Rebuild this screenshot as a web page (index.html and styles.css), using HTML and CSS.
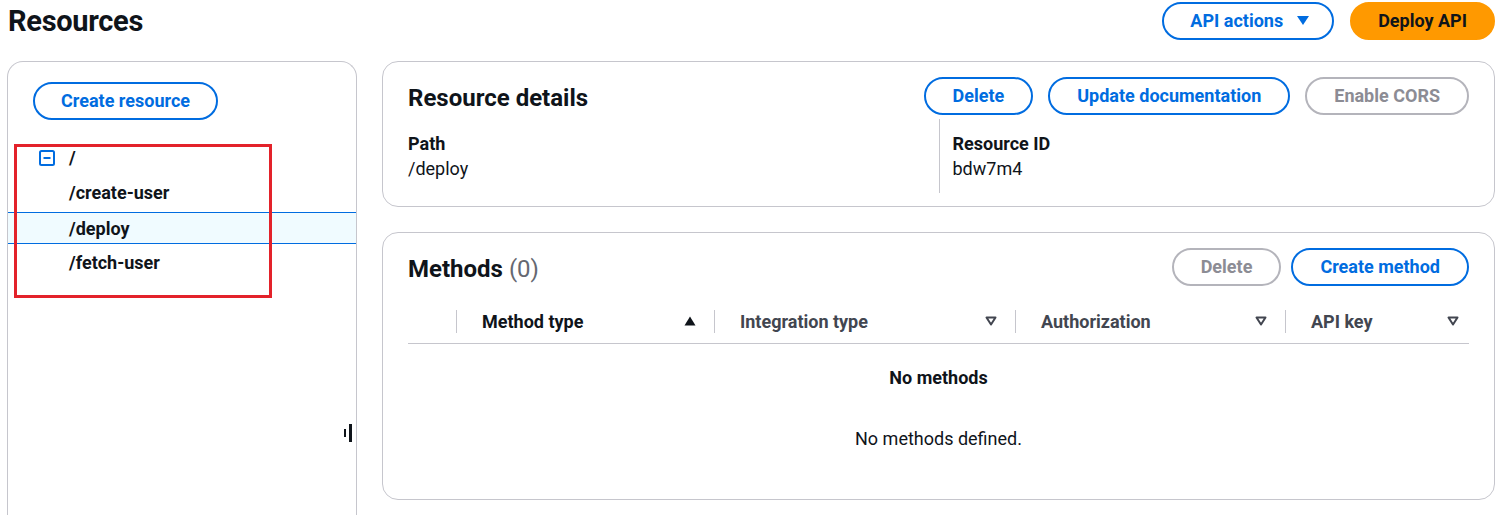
FILE: index.html
```html
<!DOCTYPE html>
<html lang="en">
<head>
<meta charset="utf-8">
<title>Resources</title>
<link rel="stylesheet" href="styles.css">
</head>
<body>
<div class="page">
  <header class="page-header">
    <h1 class="page-title">Resources</h1>
    <div class="header-actions">
      <button class="btn btn-dropdown">API actions
        <svg class="caret" width="12" height="9" viewBox="0 0 12 9"><polygon points="0,0 12,0 6,9" fill="currentColor"/></svg>
      </button>
      <button class="btn btn-primary">Deploy API</button>
    </div>
  </header>

  <div class="layout">
    <aside class="nav-panel">
      <div class="nav-top">
        <button class="btn">Create resource</button>
      </div>
      <ul class="tree">
        <li class="tree-row tree-root">
          <svg class="tree-toggle" width="16" height="16" viewBox="0 0 16 16"><rect x="1" y="1" width="14" height="14" rx="1.5" fill="none" stroke="#006ce0" stroke-width="2"/><line x1="4.5" y1="8" x2="11.5" y2="8" stroke="#006ce0" stroke-width="2"/></svg>
          <span>/</span>
        </li>
        <li class="tree-row">/create-user</li>
        <li class="tree-row is-selected">/deploy</li>
        <li class="tree-row">/fetch-user</li>
      </ul>
      <div class="annotation"></div>
      <div class="resize-handle"><span class="bar-small"></span><span class="bar-large"></span></div>
    </aside>

    <main class="content">
      <section class="container">
        <div class="container-header">
          <h2 class="container-title">Resource details</h2>
          <div class="btn-group">
            <button class="btn">Delete</button>
            <button class="btn">Update documentation</button>
            <button class="btn btn-disabled">Enable CORS</button>
          </div>
        </div>
        <div class="kv-grid">
          <div class="kv-col">
            <div class="kv-label">Path</div>
            <div class="kv-value">/deploy</div>
          </div>
          <div class="kv-col kv-divided">
            <div class="kv-label">Resource ID</div>
            <div class="kv-value">bdw7m4</div>
          </div>
        </div>
      </section>

      <section class="container container-table">
        <div class="container-header">
          <h2 class="container-title">Methods <span class="counter">(0)</span></h2>
          <div class="btn-group btn-group-tight">
            <button class="btn btn-disabled">Delete</button>
            <button class="btn">Create method</button>
          </div>
        </div>
        <div class="table">
          <div class="th th-select"></div>
          <div class="th th-sorted">
            <span class="th-label">Method type</span>
            <svg class="sort-icon" width="12" height="10" viewBox="0 0 12 10"><polygon points="6,0.5 11.5,9.5 0.5,9.5" fill="#0f141a"/></svg>
          </div>
          <div class="th">
            <span class="th-label">Integration type</span>
            <svg class="sort-icon" width="12" height="10" viewBox="0 0 12 10"><polygon points="1.5,1.5 10.5,1.5 6,8.5" fill="none" stroke="#424650" stroke-width="2" stroke-linejoin="round"/></svg>
          </div>
          <div class="th">
            <span class="th-label">Authorization</span>
            <svg class="sort-icon" width="12" height="10" viewBox="0 0 12 10"><polygon points="1.5,1.5 10.5,1.5 6,8.5" fill="none" stroke="#424650" stroke-width="2" stroke-linejoin="round"/></svg>
          </div>
          <div class="th th-last">
            <span class="th-label">API key</span>
            <svg class="sort-icon" width="12" height="10" viewBox="0 0 12 10"><polygon points="1.5,1.5 10.5,1.5 6,8.5" fill="none" stroke="#424650" stroke-width="2" stroke-linejoin="round"/></svg>
          </div>
          <div class="empty-state">
            <div class="empty-title">No methods</div>
            <div class="empty-text">No methods defined.</div>
          </div>
        </div>
      </section>
    </main>
  </div>
</div>
</body>
</html>
```

FILE: styles.css
```css
* { box-sizing: border-box; }

html, body {
  margin: 0;
  padding: 0;
  background: #ffffff;
  overflow: hidden;
}

body {
  font-family: Roboto, "Open Sans", "Liberation Sans", sans-serif;
  font-size: 18px;
  line-height: 25px;
  color: #0f141a;
}

.page {
  padding: 0 16px 0 7px;
}

.page-header {
  display: flex;
  align-items: center;
  justify-content: space-between;
  height: 41px;
}

.page-title {
  margin: 0 0 0 1px;
  font-size: 29px;
  line-height: 36px;
  font-weight: 700;
  letter-spacing: -0.3px;
}

.header-actions {
  display: flex;
  gap: 16px;
}

.btn {
  display: inline-flex;
  align-items: center;
  height: 38px;
  padding: 0 27px;
  border: 2px solid #006ce0;
  border-radius: 20px;
  background: #ffffff;
  color: #006ce0;
  font-family: inherit;
  font-size: 18px;
  font-weight: 700;
  line-height: 1;
  white-space: nowrap;
  cursor: pointer;
}

.btn-dropdown {
  padding: 0 23px 0 26px;
  gap: 14px;
}

.caret { display: block; }

.btn-primary {
  padding: 0 26px;
  background: #ff9900;
  border-color: #ff9900;
  color: #0f141a;
}

.btn-disabled {
  border-color: #b4b4bb;
  color: #8c8c94;
  cursor: default;
}

.layout {
  display: grid;
  grid-template-columns: 350px 1fr;
  gap: 25px;
  margin-top: 20px;
}

/* left navigation panel */
.nav-panel {
  position: relative;
  height: 454px;
  border: 1px solid #c6c6cd;
  border-bottom: none;
  border-radius: 16px 16px 0 0;
  padding-top: 20px;
}

.nav-top {
  padding-left: 25px;
}

.nav-top .btn {
  padding: 0 26px;
}

.tree {
  list-style: none;
  margin: 20px 0 0;
  padding: 0;
}

.tree-row {
  display: flex;
  align-items: center;
  height: 35px;
  padding-left: 61px;
  font-weight: 700;
}

.tree-root {
  padding-left: 31px;
}

.tree-toggle {
  display: block;
  margin-right: 14px;
}

.tree-row.is-selected {
  height: 32px;
  margin: 2px 0 1px;
  background: #f0fbff;
  border-top: 1px solid #006ce0;
  border-bottom: 1px solid #006ce0;
}

.annotation {
  position: absolute;
  left: 6px;
  top: 82px;
  width: 258px;
  height: 154px;
  border: 3px solid #e3222a;
  pointer-events: none;
}

.resize-handle {
  position: absolute;
  left: 336px;
  top: 362px;
  display: flex;
  align-items: center;
  gap: 3px;
}

.bar-small {
  width: 2px;
  height: 8px;
  background: #0f141a;
}

.bar-large {
  width: 3px;
  height: 18px;
  background: #0f141a;
}

/* right content */
.content {
  display: flex;
  flex-direction: column;
  gap: 25px;
}

.container {
  border: 1px solid #c6c6cd;
  border-radius: 16px;
  padding: 15px 25px 13px;
}

.container-table {
  padding-bottom: 0;
}

.container-header {
  display: flex;
  align-items: center;
  justify-content: space-between;
  height: 38px;
}

.container-title {
  margin: 0;
  padding-top: 3px;
  font-size: 24px;
  line-height: 30px;
  font-weight: 700;
}

.counter {
  font-weight: 400;
  color: #656871;
}

.btn-group {
  display: flex;
  gap: 15px;
}

.btn-group-tight {
  gap: 10px;
}

.kv-grid {
  display: grid;
  grid-template-columns: 1fr 1fr;
  margin-top: 4px;
}

.kv-col {
  padding: 12px 0;
}

.kv-divided {
  border-left: 1px solid #c6c6cd;
  padding-left: 13px;
}

.kv-label {
  font-weight: 700;
}

/* table */
.table {
  display: grid;
  grid-template-columns: 48px 258px 301px 270px 1fr;
  margin-top: 10px;
}

.th {
  display: flex;
  align-items: center;
  height: 48px;
  padding-top: 3px;
  padding-right: 18px;
  border-bottom: 1px solid #c6c6cd;
  font-weight: 700;
  color: #424650;
}

.th::before {
  content: "";
  width: 1px;
  height: 23px;
  margin-right: 25px;
  background: #c6c6cd;
}

.th-select::before { display: none; }

.th-sorted { color: #0f141a; }

.th-last { padding-right: 10px; }

.th-label { flex: 1; }

.sort-icon { display: block; }

.empty-state {
  grid-column: 1 / -1;
  text-align: center;
  padding: 21px 0 48px;
}

.empty-title {
  font-weight: 700;
}

.empty-text {
  margin-top: 36px;
}
```
